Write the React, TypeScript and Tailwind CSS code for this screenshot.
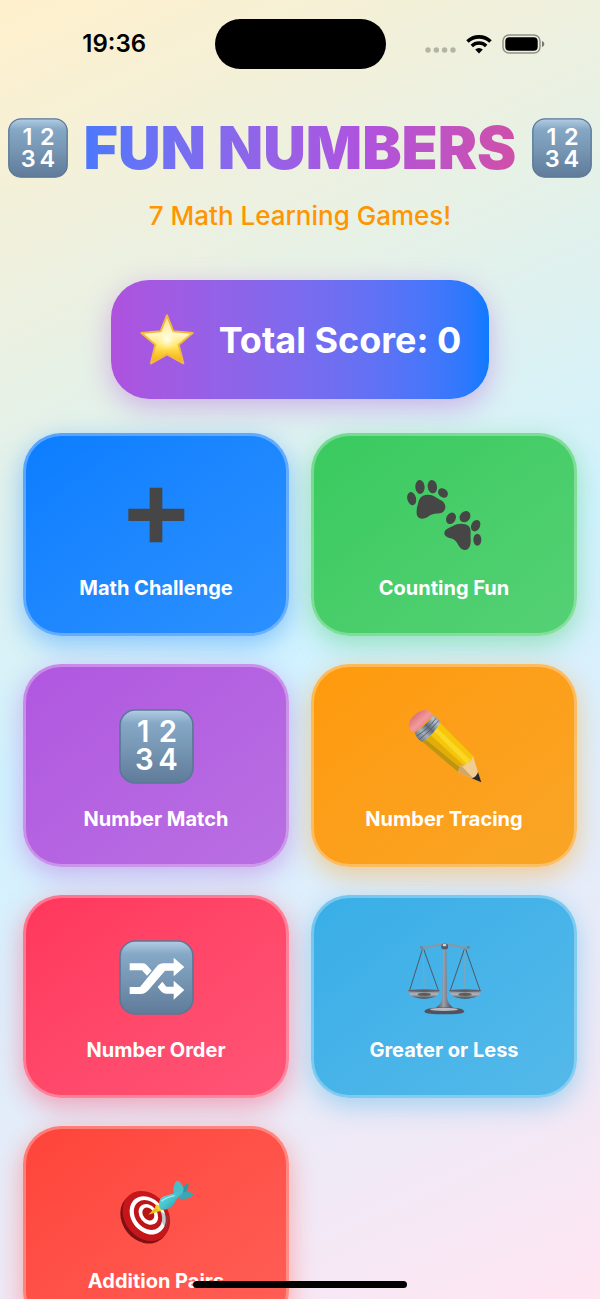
import type { ReactNode } from 'react'

type Game = {
	name: string
	style: string
	icon: ReactNode
}

const games: Game[] = [
	{
		name: 'Math Challenge',
		style: 'from-[#0a7dff] to-[#2c91ff] shadow-[0_8px_26px_rgba(10,125,255,0.4)]',
		icon: <PlusIcon />
	},
	{
		name: 'Counting Fun',
		style: 'from-[#38ca5e] to-[#55d175] shadow-[0_8px_26px_rgba(52,199,89,0.4)]',
		icon: <PawsIcon />
	},
	{
		name: 'Number Match',
		style: 'from-[#b057e0] to-[#b96fe2] shadow-[0_8px_26px_rgba(175,82,222,0.4)]',
		icon: <DigitsIcon />
	},
	{
		name: 'Number Tracing',
		style: 'from-[#ff9a0a] to-[#f9a526] shadow-[0_8px_26px_rgba(255,149,0,0.4)]',
		icon: <PencilIcon />
	},
	{
		name: 'Number Order',
		style: 'from-[#ff375c] to-[#ff5577] shadow-[0_8px_26px_rgba(255,45,85,0.4)]',
		icon: <ShuffleIcon />
	},
	{
		name: 'Greater or Less',
		style: 'from-[#38aee7] to-[#54b9ea] shadow-[0_8px_26px_rgba(50,173,230,0.4)]',
		icon: <ScalesIcon />
	},
	{
		name: 'Addition Pairs',
		style: 'from-[#ff4339] to-[#ff5f57] shadow-[0_8px_26px_rgba(255,59,48,0.4)]',
		icon: <TargetIcon />
	}
]

function App() {
	return (
		<div className="relative flex h-screen flex-col overflow-hidden bg-[linear-gradient(155deg,#fff0cc_0%,#d0f2ff_50%,#ffe5f2_100%)] font-[Inter,'Liberation_Sans',sans-serif]">
			<StatusBar />
			<main className="flex-1 overflow-y-auto pt-[43px] pb-10 [scrollbar-width:none]">
				<header className="flex flex-col items-center">
					<div className="flex items-center justify-center gap-4">
						<div className="size-[60px] shrink-0">
							<DigitsIcon />
						</div>
						<h1 className="bg-linear-to-r from-[#4a78fb] via-[#af52de] via-65% to-[#d04fa8] bg-clip-text text-[59px] leading-[70px] font-black whitespace-nowrap text-transparent">
							FUN NUMBERS
						</h1>
						<div className="size-[60px] shrink-0">
							<DigitsIcon />
						</div>
					</div>
					<p className="mt-[15px] text-[26px] leading-9 font-medium text-[#ff9500]">7 Math Learning Games!</p>
				</header>

				<Score value={0} />

				<div className="mt-[34px] grid grid-cols-2 gap-x-[22px] gap-y-7 px-[23px]">
					{games.map(game => (
						<button
							key={game.name}
							type="button"
							className={`flex h-[203px] cursor-pointer flex-col items-center rounded-[38px] border-3 border-white/30 bg-linear-to-br bg-origin-border pt-[42px] ${game.style}`}
						>
							<span className="size-[75px]">{game.icon}</span>
							<span className="mt-[22px] text-[20px] leading-[26px] font-bold text-white">{game.name}</span>
						</button>
					))}
				</div>
			</main>
			<div className="absolute bottom-[11px] left-1/2 h-[7px] w-[214px] -translate-x-1/2 rounded-full bg-black" />
		</div>
	)
}

function StatusBar() {
	return (
		<div className="grid grid-cols-[1fr_171px_1fr] items-center pt-[18px]">
			<div className="pl-[14px] text-center text-[24px] leading-[52px] font-semibold text-black">19:36</div>
			<div className="h-[50px] rounded-full bg-black" />
			<div className="flex items-center justify-center gap-[10px] pr-4">
				<svg viewBox="0 0 31 20" className="w-[31px]" fill="#000" fillOpacity="0.25">
					<circle cx="3" cy="16" r="2.700" />
					<circle cx="11.300" cy="16" r="2.700" />
					<circle cx="19.600" cy="16" r="2.700" />
					<circle cx="28" cy="16" r="2.700" />
				</svg>
				<svg viewBox="0 0 26 20" className="w-[26px]" fill="none" stroke="#000">
					<path d="M1.500 7.500a16.500 16.500 0 0 1 23 0" strokeWidth="3.600" />
					<path d="M5.800 12a10.200 10.200 0 0 1 14.400 0" strokeWidth="3.400" />
					<path d="M13 19.500l-3.800-3.900a5.400 5.400 0 0 1 7.600 0z" fill="#000" stroke="none" />
				</svg>
				<svg viewBox="0 0 43 20" className="w-[43px]">
					<rect x="1" y="1" width="37" height="18" rx="6" fill="none" stroke="#000" strokeOpacity="0.4" strokeWidth="1.500" />
					<rect x="3.300" y="3.300" width="32.400" height="13.400" rx="4" />
					<path d="M40 7c3 1 3 5 0 6z" fillOpacity="0.5" />
				</svg>
			</div>
		</div>
	)
}

function Score({ value }: { value: number }) {
	return (
		<section className="mx-auto mt-[46px] flex h-[119px] w-fit items-center gap-6 rounded-[38px] bg-linear-to-r from-[#af52de] to-[#0a7aff] px-7 shadow-[0_8px_28px_rgba(175,82,222,0.4)]">
			<svg viewBox="120 124 168 168" className="size-14">
				<defs>
					<linearGradient id="star" x1="0" y1="0" x2="0" y2="1">
						<stop offset="0" stopColor="#ffe58a" />
						<stop offset="0.4" stopColor="#fff7c8" />
						<stop offset="0.65" stopColor="#ffe45c" />
						<stop offset="1" stopColor="#f6a800" />
					</linearGradient>
					<radialGradient id="star-glow">
						<stop offset="0" stopColor="#fffef0" />
						<stop offset="1" stopColor="#fff6b0" stopOpacity="0" />
					</radialGradient>
				</defs>
				<path
					d="M204 134L223 182L281 187L239 222L253 278L204 251L156 278L169 222L127 187L185 182Z"
					fill="url(#star)"
					stroke="#f3b93e"
					strokeWidth="6"
					strokeLinejoin="round"
				/>
				<circle cx="204" cy="206" r="34" fill="url(#star-glow)" />
			</svg>
			<p className="text-[36px] leading-[46px] font-bold whitespace-nowrap text-white">Total Score: {value}</p>
		</section>
	)
}

function KeyTile({ viewBox, children }: { viewBox: string; children: ReactNode }) {
	return (
		<svg viewBox={viewBox} className="size-full">
			<defs>
				<linearGradient id="tile" x1="0" y1="0" x2="0" y2="1">
					<stop offset="0" stopColor="#b4cde4" />
					<stop offset="0.18" stopColor="#85a8c6" />
					<stop offset="0.5" stopColor="#7898b5" />
					<stop offset="1" stopColor="#5f7b99" />
				</linearGradient>
			</defs>
			<rect x="43" y="30" width="219" height="219" rx="46" fill="url(#tile)" stroke="#5a7896" strokeWidth="5" />
			{children}
		</svg>
	)
}

function DigitsIcon() {
	return (
		<KeyTile viewBox="40 27 225 225">
			<text x="113 187 116 187" y="127 127 211 211" fill="#fff" fontSize="88" fontWeight="600" textAnchor="middle">
				1234
			</text>
		</KeyTile>
	)
}

function ShuffleIcon() {
	return (
		<KeyTile viewBox="40 27 225 225">
			<g fill="#fff">
				<path d="M72 97H111Q119 97 125 104L138 119L124 134L109 118H72Z" />
				<path d="M72 168H103L152 108Q160 97 173 97H204V80L236 108L204 136V119H178L128 178Q118 189 106 189H72Z" />
				<path d="M156 168L170 152L182 167H204V149L236 177L204 206V188H181Q172 188 166 181Z" />
			</g>
		</KeyTile>
	)
}

function PlusIcon() {
	return (
		<svg viewBox="26 24 225 225" className="size-full">
			<path d="M118 53H156V116H222V153H156V217H118V153H54V116H118Z" fill="#464646" />
		</svg>
	)
}

function PawsIcon() {
	return (
		<svg viewBox="50 24 225 225" className="size-full" fill="#464646">
			<ellipse cx="64" cy="86" rx="13" ry="20" transform="rotate(-15 64 86)" />
			<ellipse cx="89" cy="51" rx="14" ry="21" transform="rotate(-3 89 51)" />
			<ellipse cx="126" cy="50" rx="14" ry="20" transform="rotate(-8 126 50)" />
			<ellipse cx="158" cy="69" rx="13" ry="16" transform="rotate(-50 158 69)" />
			<path d="M110 74C130 73 138 84 152 91C170 100 169 123 152 129C140 132 128 129 116 138C100 150 80 150 79 130C78 115 82 105 85 94C89 80 98 75 110 74Z" />
			<ellipse cx="182" cy="145" rx="14" ry="18" transform="rotate(30 182 145)" />
			<ellipse cx="224" cy="140" rx="15" ry="18" transform="rotate(40 224 140)" />
			<ellipse cx="256" cy="167" rx="13" ry="18" transform="rotate(25 256 167)" />
			<ellipse cx="261" cy="209" rx="12" ry="18" />
			<path d="M162 190C162 178 175 175 188 168C200 160 222 158 235 168C244 177 240 192 241 205C243 222 238 240 224 240C208 240 205 222 195 212C185 203 163 205 162 190Z" />
		</svg>
	)
}

function PencilIcon() {
	return (
		<svg viewBox="34 27 225 225" className="size-full">
			<defs>
				<linearGradient id="ferrule" x1="0" y1="1" x2="1" y2="0">
					<stop offset="0" stopColor="#4c5563" />
					<stop offset="0.35" stopColor="#a5b1bf" />
					<stop offset="0.55" stopColor="#5f6977" />
					<stop offset="0.8" stopColor="#b9c3cf" />
					<stop offset="1" stopColor="#77808c" />
				</linearGradient>
				<linearGradient id="eraser" x1="0" y1="0" x2="1" y2="1">
					<stop offset="0" stopColor="#c9525c" />
					<stop offset="0.5" stopColor="#f29a9d" />
					<stop offset="1" stopColor="#c96870" />
				</linearGradient>
			</defs>
			<path d="M57 97Q40 90 39 77Q40 57 60 42Q82 26 98 32Q107 36 113 47Z" fill="url(#eraser)" />
			<path d="M80 125L133 68L232 168L236 178L197 222L186 216Z" fill="#f5c60a" />
			<path d="M80 125L93 111L201 203L197 222L184 214Z" fill="#bf9410" />
			<path d="M88 117L101 102L207 198L199 208Z" fill="#e2ad08" />
			<path d="M112 91L121 81L224 180L214 192Z" fill="#fbd828" />
			<path d="M57 97Q88 78 112 47Q128 52 134 68Q114 103 80 126Q62 117 57 97Z" fill="url(#ferrule)" />
			<path d="M63 108Q96 88 121 55M71 118Q103 95 129 62" fill="none" stroke="#59626f" strokeWidth="3" />
			<path d="M186 216L196 196Q207 202 213 189Q226 188 232 168L256 246Z" fill="#f0cd94" />
			<path d="M186 216L196 196L235 238L256 246Z" fill="#d2a568" />
			<path d="M228 235Q242 232 247 216L257 247Z" fill="#29282c" />
		</svg>
	)
}

function ScalesIcon() {
	return (
		<svg viewBox="34 27 225 225" className="size-full">
			<defs>
				<linearGradient id="steel" x1="0" y1="0" x2="1" y2="0">
					<stop offset="0" stopColor="#4b4d59" />
					<stop offset="0.45" stopColor="#9c9eaa" />
					<stop offset="1" stopColor="#454753" />
				</linearGradient>
				<linearGradient id="pan" x1="0" y1="0" x2="0" y2="1">
					<stop offset="0" stopColor="#747682" />
					<stop offset="0.5" stopColor="#b3b5bd" />
					<stop offset="1" stopColor="#44464f" />
				</linearGradient>
			</defs>
			<g fill="none" stroke="#4e5864" strokeWidth="3">
				<path d="M82 49L42 178M82 49L128 178M208 49L164 178M208 49L253 178" />
				<path d="M82 49L86 182M208 49L206 182" stroke="#86a5b8" strokeWidth="2.500" />
			</g>
			<path d="M77 49Q90 53 104 47Q125 40 147 43Q169 40 190 47Q204 53 218 49" fill="none" stroke="#8e959d" strokeWidth="6" />
			<circle cx="77" cy="49" r="4" fill="#777d85" />
			<circle cx="218" cy="49" r="4" fill="#777d85" />
			<path d="M142 52H152L154 198Q156 218 172 230H121Q139 218 140 198Z" fill="url(#steel)" />
			<rect x="137" y="38" width="20" height="17" rx="6" fill="#555a65" />
			<rect x="141" y="39" width="11" height="7" rx="3" fill="#cbd8e0" />
			<path d="M37 177H132Q130 203 85 203Q40 203 37 177Z" fill="url(#pan)" />
			<path d="M160 177H257Q253 203 208 203Q163 203 160 177Z" fill="url(#pan)" />
			<ellipse cx="85" cy="179" rx="47" ry="4" fill="#5d5f6a" />
			<ellipse cx="208" cy="179" rx="48" ry="4" fill="#5d5f6a" />
			<ellipse cx="86" cy="190" rx="20" ry="5" fill="#5c5c50" />
			<ellipse cx="208" cy="190" rx="20" ry="5" fill="#5c5c50" />
			<path d="M86 242Q87 230 146 229Q205 230 206 242Q200 250 146 250Q92 250 86 242Z" fill="#50525d" />
			<ellipse cx="145" cy="235" rx="42" ry="5" fill="#b8bac4" />
		</svg>
	)
}

function TargetIcon() {
	return (
		<svg viewBox="40 6 225 225" className="size-full">
			<defs>
				<linearGradient id="dart" x1="0" y1="0" x2="1" y2="1">
					<stop offset="0" stopColor="#6fdde2" />
					<stop offset="0.5" stopColor="#45c3cc" />
					<stop offset="1" stopColor="#248f9d" />
				</linearGradient>
			</defs>
			<ellipse cx="116" cy="148" rx="66" ry="81" transform="rotate(-38 116 148)" fill="#7d1013" />
			<ellipse cx="122" cy="141" rx="65" ry="81" transform="rotate(-38 122 141)" fill="#c4161b" />
			<ellipse cx="126" cy="139" rx="49" ry="62" transform="rotate(-38 126 139)" fill="#fff" />
			<ellipse cx="127" cy="138" rx="38" ry="49" transform="rotate(-38 127 138)" fill="#bd1519" />
			<ellipse cx="128" cy="136" rx="26" ry="34" transform="rotate(-38 128 136)" fill="#fff" />
			<ellipse cx="128" cy="135" rx="16" ry="21" transform="rotate(-38 128 135)" fill="#b81418" />
			<path d="M164 126L192 145L181 181L169 160Z" fill="#54616c" fillOpacity="0.35" />
			<path d="M128 137L153 111L167 125Z" fill="#edbd18" />
			<path d="M152 106Q162 108 171 124L158 124L148 114Z" fill="#f6d02b" />
			<path d="M230 66L237 48L247 43L249 50L239 74Z" fill="#2d99a7" />
			<path d="M204 76Q201 44 214 35Q226 35 234 61L229 80Z" fill="#49bec8" />
			<path d="M218 84L234 70Q256 67 263 76Q256 91 225 90Z" fill="#35a9b5" />
			<path d="M160 105Q160 84 181 80Q199 75 229 66L227 77Q211 89 206 103Q194 122 169 123Q160 118 160 105Z" fill="url(#dart)" />
			<path d="M167 97Q184 84 207 80" fill="none" stroke="#a0edf0" strokeWidth="4" />
		</svg>
	)
}

export default App
